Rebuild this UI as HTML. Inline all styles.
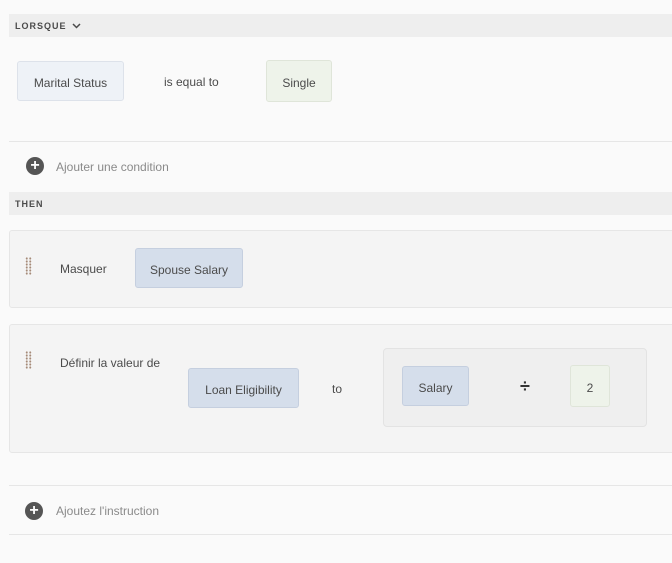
<!DOCTYPE html>
<html><head><meta charset="utf-8"><style>
*{margin:0;padding:0;box-sizing:border-box}
body{width:672px;height:563px;background:#fafafa;font-family:"Liberation Sans",sans-serif;font-size:12px;color:#4b4b4b;position:relative;overflow:hidden}
.a{position:absolute}
.hdr{left:9px;width:663px;height:23px;background:#eeeeee;font-size:9px;font-weight:bold;letter-spacing:1px;color:#4b4b4b;padding:7px 0 0 6px}
.line{left:9px;width:663px;height:1px;background:#e6e6e6}
.chip{border:1px solid #d8dde6;border-radius:3px;display:flex;align-items:center;justify-content:center;font-size:12px;color:#4b4b4b;padding-top:3px}
.blue{background:#d5deeb;border-color:#c5cfdf}
.lb{background:#eef2f7;border-color:#dde2ea}
.green{background:#eef3ea;border-color:#dfe5d9}
.card{left:9px;width:670px;background:#f4f4f4;border:1px solid #e6e6e6;border-radius:3px}
.grip{width:7px;height:18px;background-image:radial-gradient(circle,#a58a78 0.9px,transparent 1.1px);background-size:3.5px 3px}
.plus{width:18px;height:18px;border-radius:50%;background:#555;color:#fff;display:flex;align-items:center;justify-content:center;font-weight:bold;font-size:16px;line-height:1}
</style></head><body>
<div class="a hdr" style="top:14px">LORSQUE <svg width="9" height="6" viewBox="0 0 9 6" style="margin-left:2px"><path d="M1 1L4.5 4.5L8 1" fill="none" stroke="#4b4b4b" stroke-width="1.5"/></svg></div>
<div class="a chip lb" style="left:17px;top:61px;width:107px;height:40px">Marital Status</div>
<div class="a" style="left:164px;top:75px">is equal to</div>
<div class="a chip green" style="left:266px;top:60px;width:66px;height:42px">Single</div>
<div class="a line" style="top:141px"></div>
<div class="a plus" style="left:26px;top:157px">+</div>
<div class="a" style="left:56px;top:160px;color:#8a8a8a">Ajouter une condition</div>
<div class="a hdr" style="top:192px">THEN</div>
<div class="a card" style="top:230px;height:78px"></div>
<div class="a grip" style="left:25px;top:257px"></div>
<div class="a" style="left:60px;top:262px">Masquer</div>
<div class="a chip blue" style="left:135px;top:248px;width:108px;height:40px">Spouse Salary</div>
<div class="a card" style="top:324px;height:129px"></div>
<div class="a grip" style="left:25px;top:351px"></div>
<div class="a" style="left:60px;top:356px">Définir la valeur de</div>
<div class="a chip blue" style="left:188px;top:368px;width:111px;height:40px">Loan Eligibility</div>
<div class="a" style="left:332px;top:382px">to</div>
<div class="a" style="left:383px;top:348px;width:264px;height:79px;background:#efefef;border:1px solid #e3e3e3;border-radius:4px"></div>
<div class="a chip blue" style="left:402px;top:366px;width:67px;height:40px">Salary</div>
<div class="a" style="left:520px;top:376px;font-size:18px;font-weight:bold;color:#333">÷</div>
<div class="a chip green" style="left:570px;top:365px;width:40px;height:42px">2</div>
<div class="a line" style="top:485px"></div>
<div class="a plus" style="left:25px;top:502px">+</div>
<div class="a" style="left:56px;top:504px;color:#8a8a8a">Ajoutez l'instruction</div>
<div class="a line" style="top:534px"></div>
</body></html>
